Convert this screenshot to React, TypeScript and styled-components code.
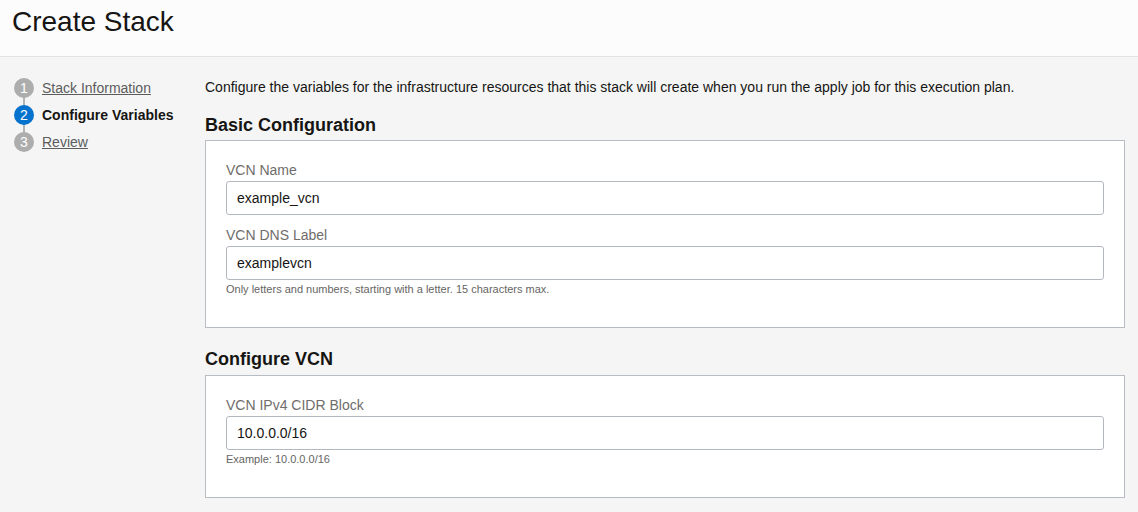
import React from "react";
import styled, { createGlobalStyle } from "styled-components";

const GlobalStyle = createGlobalStyle`
  html, body {
    margin: 0;
    padding: 0;
    overflow: hidden;
    background: #f5f5f5;
    font-family: "Liberation Sans", Arial, sans-serif;
    color: #161513;
  }
  * { box-sizing: border-box; }
`;

const Header = styled.header`
  height: 57px;
  padding: 6px 12px 0;
  background: #fcfcfc;
  border-bottom: 1px solid #e2e2e2;
`;

const Title = styled.h1`
  margin: 0;
  font-size: 28px;
  line-height: 32px;
  font-weight: 400;
  color: #161513;
`;

const Main = styled.main`
  display: flex;
  padding: 17px 13px 0 14px;
`;

const Steps = styled.ol`
  list-style: none;
  margin: 0;
  padding: 0;
  width: 191px;
  flex: none;
`;

const Step = styled.li<{ $last?: boolean }>`
  position: relative;
  display: flex;
  align-items: center;
  gap: 8px;
  height: 27px;
  &::after {
    content: "";
    display: ${(p) => (p.$last ? "none" : "block")};
    position: absolute;
    left: 9px;
    top: 20px;
    width: 2px;
    height: 14px;
    background: #b3b3b3;
  }
`;

const Dot = styled.span<{ $active?: boolean }>`
  position: relative;
  z-index: 1;
  width: 20px;
  height: 20px;
  border-radius: 50%;
  flex: none;
  display: flex;
  align-items: center;
  justify-content: center;
  background: ${(p) => (p.$active ? "#0572ce" : "#adadad")};
  color: #fff;
  font-size: 14px;
  line-height: 1;
`;

const StepLabel = styled.a<{ $active?: boolean }>`
  font-size: 14px;
  line-height: 18px;
  color: ${(p) => (p.$active ? "#161513" : "#5c5c5c")};
  font-weight: ${(p) => (p.$active ? 700 : 400)};
  text-decoration: ${(p) => (p.$active ? "none" : "underline")};
`;

const Content = styled.section`
  flex: 1;
  min-width: 0;
`;

const Intro = styled.p`
  margin: 3px 0 0;
  font-size: 14px;
  line-height: 20px;
  color: #161513;
`;

const SectionTitle = styled.h2<{ $first?: boolean }>`
  margin: ${(p) => (p.$first ? "16px 0 3px" : "19px 0 4px")};
  font-size: 18px;
  line-height: 24px;
  font-weight: 700;
  color: #161513;
`;

const Panel = styled.div`
  background: #fff;
  border: 1px solid #b8bcc3;
  padding: 20px 20px 31px;
`;

const Field = styled.div`
  & + & {
    margin-top: 11px;
  }
`;

const Label = styled.label`
  display: block;
  font-size: 14px;
  line-height: 18px;
  color: #6f6d6b;
  margin-bottom: 2px;
`;

const Input = styled.input`
  display: block;
  width: 100%;
  height: 34px;
  padding: 0 10px;
  border: 1px solid #b3b8bf;
  border-radius: 3px;
  background: #fff;
  font-family: "Liberation Sans", Arial, sans-serif;
  font-size: 14px;
  color: #161513;
  outline: none;
`;

const Help = styled.div`
  margin-top: 2px;
  font-size: 11px;
  line-height: 14px;
  color: #666563;
`;

const steps = [
  { n: 1, label: "Stack Information" },
  { n: 2, label: "Configure Variables", active: true },
  { n: 3, label: "Review" },
];

export default function App() {
  return (
    <>
      <GlobalStyle />
      <Header>
        <Title>Create Stack</Title>
      </Header>
      <Main>
        <Steps>
          {steps.map((s, i) => (
            <Step key={s.n} $last={i === steps.length - 1}>
              <Dot $active={s.active}>{s.n}</Dot>
              <StepLabel $active={s.active}>{s.label}</StepLabel>
            </Step>
          ))}
        </Steps>
        <Content>
          <Intro>
            Configure the variables for the infrastructure resources that this stack will create when you run the apply job for this execution plan.
          </Intro>
          <SectionTitle $first>Basic Configuration</SectionTitle>
          <Panel>
            <Field>
              <Label>VCN Name</Label>
              <Input defaultValue="example_vcn" />
            </Field>
            <Field>
              <Label>VCN DNS Label</Label>
              <Input defaultValue="examplevcn" />
              <Help>Only letters and numbers, starting with a letter. 15 characters max.</Help>
            </Field>
          </Panel>
          <SectionTitle>Configure VCN</SectionTitle>
          <Panel>
            <Field>
              <Label>VCN IPv4 CIDR Block</Label>
              <Input defaultValue="10.0.0.0/16" />
              <Help>Example: 10.0.0.0/16</Help>
            </Field>
          </Panel>
        </Content>
      </Main>
    </>
  );
}
